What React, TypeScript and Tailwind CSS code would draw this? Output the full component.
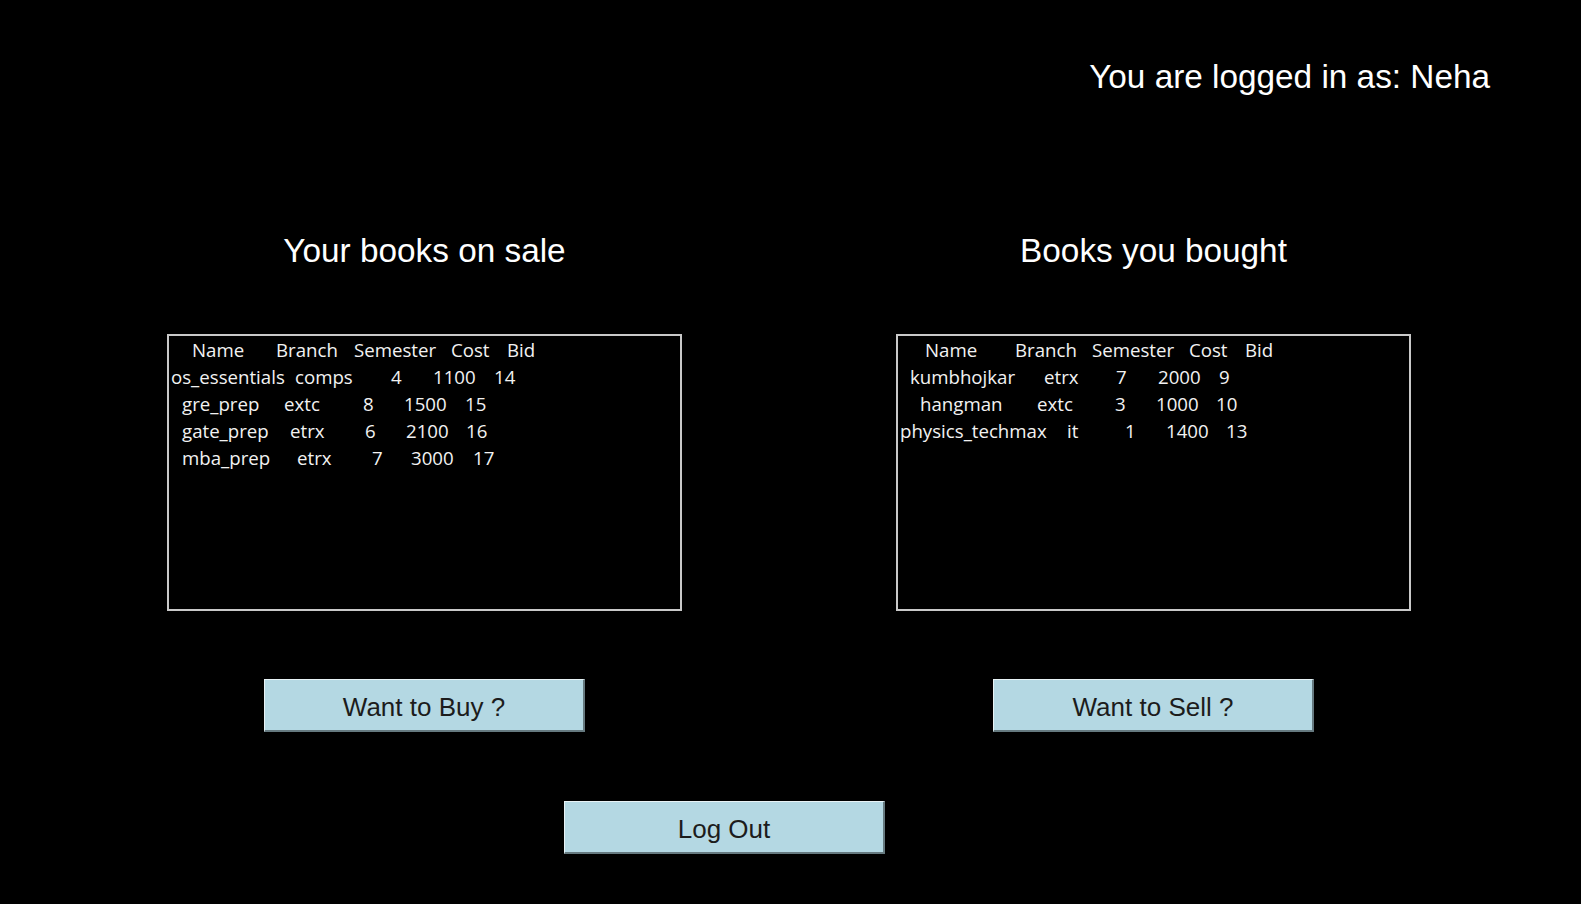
import React from 'react';

type Cell = [string, number];

// token x offsets (px) measured from the inner left edge of each list box
const onSale: Cell[][] = [
  [['Name', 23], ['Branch', 107], ['Semester', 185], ['Cost', 282], ['Bid', 338]],
  [['os_essentials', 2], ['comps', 126], ['4', 222], ['1100', 264], ['14', 325]],
  [['gre_prep', 13], ['extc', 115], ['8', 194], ['1500', 235], ['15', 296]],
  [['gate_prep', 13], ['etrx', 121], ['6', 196], ['2100', 237], ['16', 297]],
  [['mba_prep', 13], ['etrx', 128], ['7', 203], ['3000', 242], ['17', 304]],
];

const bought: Cell[][] = [
  [['Name', 27], ['Branch', 117], ['Semester', 194], ['Cost', 291], ['Bid', 347]],
  [['kumbhojkar', 12], ['etrx', 146], ['7', 218], ['2000', 260], ['9', 321]],
  [['hangman', 22], ['extc', 139], ['3', 217], ['1000', 258], ['10', 318]],
  [['physics_techmax', 2], ['it', 169], ['1', 227], ['1400', 268], ['13', 328]],
];

function ListBox({ rows }: { rows: Cell[][] }) {
  return (
    <div className="w-[515px] h-[277px] border-2 border-[#c9c9c9] bg-black overflow-hidden">
      {rows.map((row, i) => (
        <div key={i} className="flex h-[27px] leading-[27px] whitespace-pre text-[18.67px] text-[#f2f2f2] font-['Open_Sans',sans-serif]">
          {row.map(([text, x], j) => {
            const next = row[j + 1];
            return (
              <span
                key={j}
                className="shrink-0"
                style={{
                  marginLeft: j === 0 ? x : 0,
                  width: next ? next[1] - x : undefined,
                }}
              >
                {text}
              </span>
            );
          })}
        </div>
      ))}
    </div>
  );
}

function TkButton({ label }: { label: string }) {
  return (
    <button className="w-[321px] h-[53px] pt-[4px] bg-[#b4d8e3] border-t border-l border-r-2 border-b-2 border-t-[#e8f3f6] border-l-[#e8f3f6] border-r-[#667a80] border-b-[#667a80] text-[26px] text-[#1c1c1c] font-['Liberation_Sans',Arial,sans-serif] leading-none">
      {label}
    </button>
  );
}

function Column({ title, rows, action }: { title: string; rows: Cell[][]; action: string }) {
  return (
    <div className="w-[515px] flex flex-col items-center">
      <h2 className="h-[33px] leading-[33px] text-[33.33px] text-white">{title}</h2>
      <div className="mt-[67px]">
        <ListBox rows={rows} />
      </div>
      <div className="mt-[68px]">
        <TkButton label={action} />
      </div>
    </div>
  );
}

export default function App() {
  return (
    <div className="w-[1581px] h-[904px] bg-black flex flex-col font-['Liberation_Sans',Arial,sans-serif] overflow-hidden">
      <div className="pt-[60px] pr-[91px] text-right text-[33.33px] leading-none text-white">
        You are logged in as: Neha
      </div>

      <div className="mt-[141px] flex pl-[167px] gap-[214px]">
        <Column title="Your books on sale" rows={onSale} action="Want to Buy ?" />
        <Column title="Books you bought" rows={bought} action="Want to Sell ?" />
      </div>

      <div className="mt-[69px] pl-[564px]">
        <TkButton label="Log Out" />
      </div>
    </div>
  );
}
